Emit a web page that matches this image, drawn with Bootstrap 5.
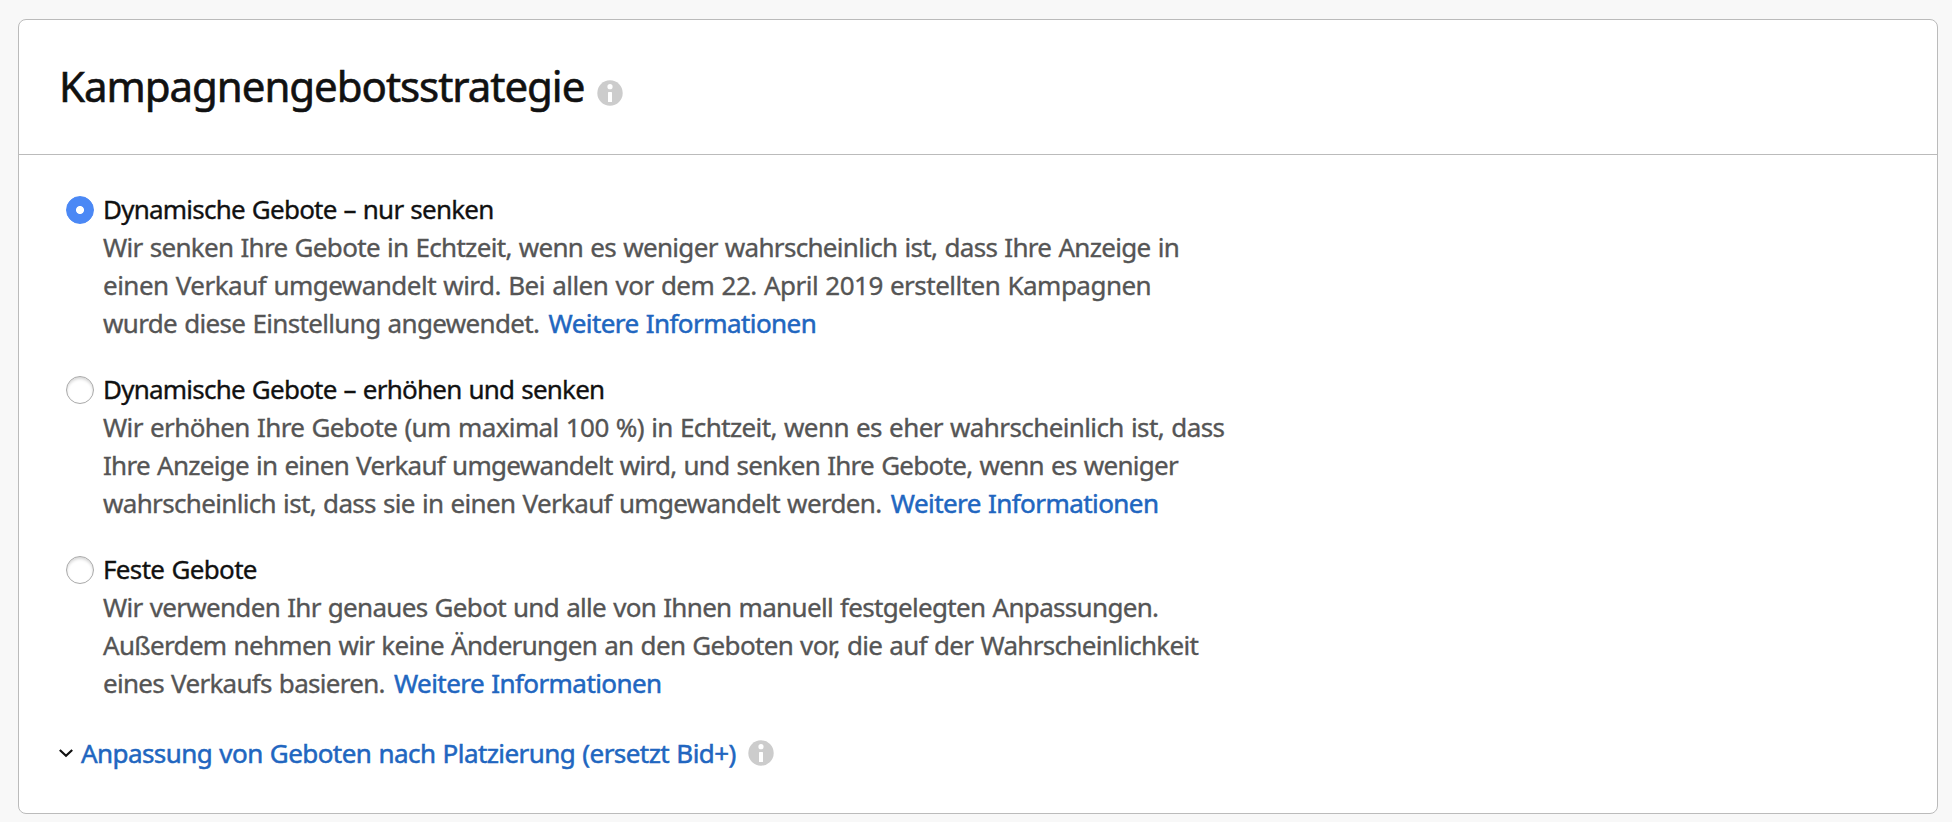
<!DOCTYPE html>
<html lang="de">
<head>
<meta charset="utf-8">
<meta name="viewport" content="width=device-width, initial-scale=1">
<title>Kampagnengebotsstrategie</title>
<link href="https://cdn.jsdelivr.net/npm/bootstrap@5.3.0/dist/css/bootstrap.min.css" rel="stylesheet">
<style>
  body { background: #f8f8f8; font-family: "Noto Sans", "Open Sans", sans-serif; font-size: 26px; line-height: 38px; color: #111; padding: 19px 14px 0 18px; word-spacing: 1px; -webkit-text-stroke: .35px currentColor; }
  .strategy-card { height: 795px; border: 1px solid #bbb; border-radius: 8px; --bs-card-bg: #fff; }
  .strategy-card .card-header { height: 135px; padding: 37px 38px 0 40px; border-bottom: 1px solid #bbb; background: transparent; }
  .strategy-title { font-size: 42px; line-height: 57px; letter-spacing: -1.04px; font-weight: 400; -webkit-text-stroke: .6px currentColor; }
  .strategy-card .card-body { padding: 35px 40px 0 47px; }
  .option { display: flex; margin-bottom: 28px; }
  .option .form-check-input { width: 28px; height: 28px; margin: 6px 9px 0 0; flex: none; border: 1px solid #aaa; background: #fff; box-shadow: inset 0 2px 3px rgba(0,0,0,.16); }
  .option .form-check-input:checked { border-color: #4b88f5; box-shadow: none; background: radial-gradient(circle at 50% 50%, #fff 3.6px, #4b88f5 4.4px); }
  .option label, .line { display: block; white-space: nowrap; }
  .line { color: #555; }
  .lnk { color: #2166c0; text-decoration: none; letter-spacing: -.57px; -webkit-text-stroke: .5px currentColor; }
  .line .lnk { margin-left: 2.2px; }
  .ls-52 { letter-spacing: -.52px; }
  .ls-60 { letter-spacing: -.6px; }
  .ls-66 { letter-spacing: -.66px; }
  .ls-68 { letter-spacing: -.68px; }
  .ls-71 { letter-spacing: -.71px; }
  .ls-77 { letter-spacing: -.77px; }
  .placement { margin: 32px 0 0 -6px; }
  .placement .lnk { letter-spacing: -.57px; }
</style>
</head>
<body>
<svg class="d-none">
  <symbol id="info" viewBox="0 0 26 26"><circle cx="13" cy="13" r="12.7" fill="#ccc"/><circle cx="13" cy="6.7" r="2.6" fill="#fff"/><rect x="11" y="12" width="4" height="10" rx=".6" fill="#fff"/></symbol>
</svg>
<main class="card strategy-card">
  <div class="card-header d-flex align-items-start">
    <h1 class="strategy-title mb-0">Kampagnengebotsstrategie</h1>
    <svg width="26" height="26" style="margin:23px 0 0 13px"><use href="#info"/></svg>
  </div>
  <div class="card-body">
    <div class="option">
      <input class="form-check-input" type="radio" name="strategy" id="down" checked>
      <div>
        <label for="down" class="ls-77">Dynamische Gebote – nur senken</label>
        <span class="line ls-68">Wir senken Ihre Gebote in Echtzeit, wenn es weniger wahrscheinlich ist, dass Ihre Anzeige in</span>
        <span class="line ls-52">einen Verkauf umgewandelt wird. Bei allen vor dem 22. April 2019 erstellten Kampagnen</span>
        <span class="line ls-66">wurde diese Einstellung angewendet. <a class="lnk" href="#">Weitere Informationen</a></span>
      </div>
    </div>
    <div class="option">
      <input class="form-check-input" type="radio" name="strategy" id="updown">
      <div>
        <label for="updown" class="ls-77">Dynamische Gebote – erhöhen und senken</label>
        <span class="line ls-60">Wir erhöhen Ihre Gebote (um maximal 100 %) in Echtzeit, wenn es eher wahrscheinlich ist, dass</span>
        <span class="line ls-71">Ihre Anzeige in einen Verkauf umgewandelt wird, und senken Ihre Gebote, wenn es weniger</span>
        <span class="line ls-66">wahrscheinlich ist, dass sie in einen Verkauf umgewandelt werden. <a class="lnk" href="#">Weitere Informationen</a></span>
      </div>
    </div>
    <div class="option mb-0">
      <input class="form-check-input" type="radio" name="strategy" id="fixed">
      <div>
        <label for="fixed" class="ls-66">Feste Gebote</label>
        <span class="line ls-68">Wir verwenden Ihr genaues Gebot und alle von Ihnen manuell festgelegten Anpassungen.</span>
        <span class="line ls-68">Außerdem nehmen wir keine Änderungen an den Geboten vor, die auf der Wahrscheinlichkeit</span>
        <span class="line ls-71">eines Verkaufs basieren. <a class="lnk" href="#">Weitere Informationen</a></span>
      </div>
    </div>
    <div class="placement d-flex align-items-start">
      <svg width="14" height="10" viewBox="0 0 14 10" style="margin:14px 8px 0 -1px" fill="none" stroke="#111" stroke-width="2.2"><path d="M.8 2 7 7.8 13.2 2"/></svg>
      <a class="lnk" href="#">Anpassung von Geboten nach Platzierung (ersetzt Bid+)</a>
      <svg width="26" height="26" style="margin:6px 0 0 12px"><use href="#info"/></svg>
    </div>
  </div>
</main>
<script src="https://cdn.jsdelivr.net/npm/bootstrap@5.3.0/dist/js/bootstrap.bundle.min.js"></script>
</body>
</html>
